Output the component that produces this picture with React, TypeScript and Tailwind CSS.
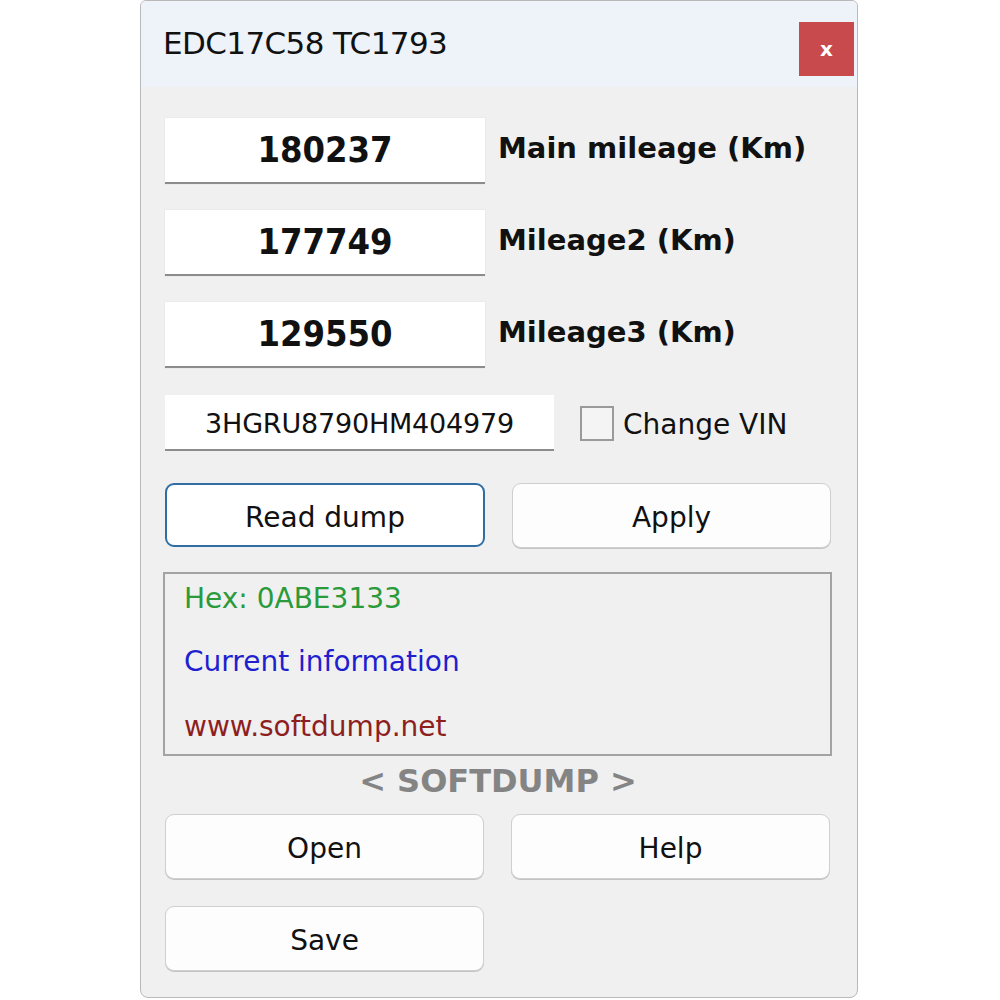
import { useState } from 'react';

const font = "font-['DejaVu_Sans',sans-serif]";
const narrow = "font-['DejaVu_Sans_Condensed','DejaVu_Sans',sans-serif]";

function MileageRow({ value, label }: { value: string; label: string }) {
  return (
    <div className="flex items-center">
      <div className={`w-[320px] h-[66px] bg-white border-b-2 border-[#8c8c8c] shadow-[0_0_1px_rgba(0,0,0,0.15)] flex items-center justify-center text-[36px] font-bold text-[#111] ${narrow}`}>
        {value}
      </div>
      <span className="ml-[13px] text-[29px] font-bold text-[#111] -mt-[4px]">{label}</span>
    </div>
  );
}

function WinButton({ children, focused }: { children: string; focused?: boolean }) {
  return (
    <button
      className={
        focused
          ? 'w-[320px] h-[64px] rounded-[9px] bg-white border-2 border-[#2f6da3] text-[28px] text-[#111] pt-[6px]'
          : 'w-[319px] h-[65px] rounded-[9px] bg-[#fdfdfd] border border-[#cfcfcf] shadow-[0_1px_0_#c4c4c4] text-[28px] text-[#111] pt-[4px]'
      }
    >
      {children}
    </button>
  );
}

export default function App() {
  const [changeVin, setChangeVin] = useState(false);

  return (
    <div className={`min-h-[1000px] bg-white ${font}`}>
      <div className="ml-[140px] w-[718px] h-[998px] bg-[#f0f0f0] border border-[#b9b9b9] rounded-b-[8px] rounded-t-[6px] overflow-hidden flex flex-col">
        {/* title bar */}
        <div className="h-[86px] bg-[#eef2f9] flex items-center justify-between pl-[22px] pr-[3px] shrink-0">
          <span className="text-[31px] text-[#111] tracking-[-0.6px] -mt-[2px]">EDC17C58 TC1793</span>
          <button className="w-[55px] h-[54px] bg-[#c94a4c] text-white text-[20px] font-bold flex items-center justify-center mt-[9px]">
            x
          </button>
        </div>

        <div className="flex flex-col pl-[24px]">
          <div className="mt-[31px] flex flex-col gap-[26px]">
            <MileageRow value="180237" label="Main mileage (Km)" />
            <MileageRow value="177749" label="Mileage2 (Km)" />
            <MileageRow value="129550" label="Mileage3 (Km)" />
          </div>

          <div className="mt-[27px] flex items-center">
            <div className="w-[389px] h-[56px] bg-white border-b-2 border-[#8c8c8c] flex items-center justify-center pt-[5px] text-[27px] text-[#111] tracking-[-0.2px]">
              3HGRU8790HM404979
            </div>
            <label className="ml-[26px] flex items-center cursor-pointer" onClick={() => setChangeVin(!changeVin)}>
              <span className="w-[34px] h-[35px] border-2 border-[#9a9a9a] bg-[#f4f4f4] flex items-center justify-center text-[22px] text-[#111]">
                {changeVin ? '✓' : ''}
              </span>
              <span className="ml-[9px] text-[28px] text-[#111] mt-[4px]">Change VIN</span>
            </label>
          </div>

          <div className="mt-[32px] flex gap-[27px]">
            <WinButton focused>Read dump</WinButton>
            <WinButton>Apply</WinButton>
          </div>

          <div className="mt-[24px] -ml-[2px] w-[669px] h-[184px] border-2 border-[#a3a3a3] flex flex-col pl-[19px] pt-[9px] text-[28px] leading-[32px]">
            <span className="text-[#2a9a3a]">Hex: 0ABE3133</span>
            <span className="mt-[31px] text-[#1f1fcf]">Current information</span>
            <span className="mt-[33px] text-[#8e1f1f]">www.softdump.net</span>
          </div>

          <div className="w-[666px] text-center mt-[7px] text-[32px] leading-[36px] font-bold text-[#848484]">
            &lt; SOFTDUMP &gt;
          </div>

          <div className="mt-[15px] flex gap-[27px]">
            <WinButton>Open</WinButton>
            <WinButton>Help</WinButton>
          </div>
          <div className="mt-[27px] flex">
            <WinButton>Save</WinButton>
          </div>
        </div>
      </div>
    </div>
  );
}
